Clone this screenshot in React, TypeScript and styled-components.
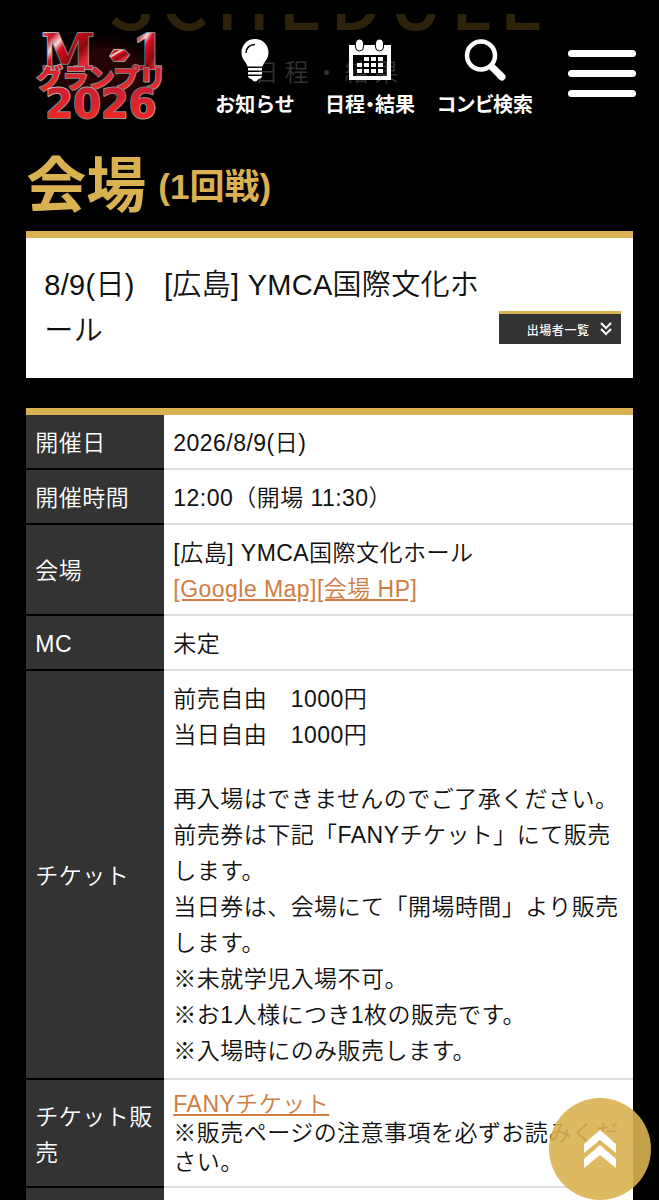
import type { ReactNode } from 'react';
import styled, { createGlobalStyle } from 'styled-components';

const GOLD = '#d9b151';
const DARK = '#333';

const GlobalStyle = createGlobalStyle`
  * {
    box-sizing: border-box;
  }
  body {
    margin: 0;
    background: #000;
    color: #111;
    font-family: 'Liberation Sans', 'Noto Sans CJK JP', sans-serif;
    font-size: 23px;
    font-weight: 350;
    line-height: 36px;
    letter-spacing: 0.02em;
  }
  h1, h2, p {
    margin: 0;
  }
`;

const Page = styled.div`
  height: 100vh;
  overflow: hidden;
  padding-top: 14px;
`;

const Hero = styled.section`
  height: 141px;
  text-align: center;
`;

const HeroTitle = styled.h1`
  display: flex;
  align-items: flex-end;
  justify-content: center;
  height: 21px;
  overflow: hidden;
  color: #2f220a;
  font-family: 'Noto Sans CJK JP', sans-serif;
  font-size: 74px;
  font-weight: 500;
  line-height: 74px;
  letter-spacing: 0.1em;
`;

const HeroSub = styled.p`
  padding-top: 20px;
  color: #333;
  font-size: 24px;
  letter-spacing: 0.25em;
`;

const Header = styled.header`
  position: absolute;
  top: 14px;
  left: 0;
  right: 0;
  display: flex;
  align-items: flex-start;
  padding: 12px 23px 0 20px;
`;

const LogoLink = styled.a`
  flex: none;
  line-height: 0;
`;

const Nav = styled.nav`
  display: flex;
  flex: 1;
  justify-content: center;
  padding: 12px 8px 0 0;
`;

const NavItem = styled.a<{ $tight?: boolean }>`
  display: flex;
  flex-direction: column;
  align-items: center;
  gap: 10px;
  width: 115px;
  color: #fff;
  font-family: 'Noto Sans CJK JP', sans-serif;
  font-size: 20px;
  font-weight: 700;
  line-height: 24px;
  letter-spacing: 0;
  font-feature-settings: ${(p) => (p.$tight ? "'palt'" : 'normal')};
  text-decoration: none;
  white-space: nowrap;
`;

const MenuButton = styled.button`
  display: flex;
  flex: none;
  flex-direction: column;
  gap: 13px;
  width: 68px;
  margin-top: 24px;
  padding: 0;
  border: 0;
  background: none;
  cursor: pointer;
`;

const MenuBar = styled.span`
  width: 100%;
  height: 7px;
  border-radius: 4px;
  background: #fff;
`;

const Main = styled.main`
  padding: 0 4%;
`;

const Heading = styled.h2`
  display: flex;
  align-items: center;
  gap: 12px;
  padding-bottom: 12px;
  color: ${GOLD};
  font-size: 60px;
  font-weight: 700;
  line-height: 64px;
  letter-spacing: 0;
`;

const Round = styled.span`
  font-size: 35px;
`;

const VenueCard = styled.section`
  display: flex;
  align-items: flex-end;
  gap: 12px;
  margin-bottom: 30px;
  padding: 24px 12px 24px 18px;
  border-top: 7px solid ${GOLD};
  background: #fff;
`;

const VenueName = styled.p`
  flex: 1;
  font-size: 29px;
  line-height: 46px;
  letter-spacing: 0.01em;
  line-break: loose;
`;

const ListButton = styled.button`
  display: flex;
  flex: none;
  align-items: center;
  justify-content: flex-end;
  gap: 10px;
  width: 122px;
  height: 33px;
  margin-bottom: 10px;
  padding: 0 9px;
  border: 0;
  border-top: 3px solid ${GOLD};
  background: ${DARK};
  color: #fff;
  font-family: 'Noto Sans CJK JP', sans-serif;
  font-size: 12px;
  font-weight: 500;
  letter-spacing: 0.05em;
  cursor: pointer;
`;

const InfoTable = styled.table`
  width: 100%;
  border-top: 7px solid ${GOLD};
  border-spacing: 0;
  background: #fff;
  table-layout: fixed;
`;

const Label = styled.th`
  width: 138px;
  height: 55px;
  padding: 10px 8px 7px 9px;
  border-bottom: 2px solid #000;
  background: ${DARK};
  color: #fff;
  font-weight: 350;
  text-align: left;
`;

const Value = styled.td<{ $roomy?: boolean }>`
  padding: ${(p) => (p.$roomy ? '10px 8px 9px 9px' : '10px 8px 7px 9px')};
  border-bottom: 2px solid #ddd;
`;

const Paragraph = styled.p`
  & + & {
    margin-top: 28px;
  }
`;

const Note = styled.p`
  line-height: 29px;
`;

const TextLink = styled.a`
  color: #d07c42;
  text-decoration: underline;
`;

const PageTop = styled.button`
  position: fixed;
  right: 8px;
  bottom: 0;
  display: flex;
  align-items: center;
  justify-content: center;
  width: 102px;
  height: 102px;
  padding: 0;
  border: 0;
  border-radius: 50%;
  background: rgba(217, 177, 81, 0.9);
  cursor: pointer;
`;

const Logo = () => (
  <svg width="160" height="104" viewBox="0 0 160 104" role="img" aria-label="M-1グランプリ2026">
    <defs>
      <linearGradient id="gem" x1="0" y1="0" x2="1" y2="1">
        <stop offset="0" stopColor="#ff8f8f" />
        <stop offset="0.2" stopColor="#c30f1c" />
        <stop offset="0.32" stopColor="#f6dcdc" />
        <stop offset="0.4" stopColor="#d8101f" />
        <stop offset="0.6" stopColor="#8d0710" />
        <stop offset="0.75" stopColor="#e8273a" />
        <stop offset="1" stopColor="#c01545" />
      </linearGradient>
      <linearGradient id="red" x1="0" y1="0" x2="0" y2="1">
        <stop offset="0" stopColor="#c81a35" />
        <stop offset="1" stopColor="#f52c22" />
      </linearGradient>
      <linearGradient id="chrome" x1="0" y1="0" x2="1" y2="1">
        <stop offset="0" stopColor="#d5d5d5" />
        <stop offset="0.5" stopColor="#777" />
        <stop offset="1" stopColor="#b8b0b0" />
      </linearGradient>
      <radialGradient id="glow">
        <stop offset="0.5" stopColor="#4a080c" stopOpacity="0.5" />
        <stop offset="1" stopColor="#000" stopOpacity="0" />
      </radialGradient>
    </defs>
    <ellipse cx="80" cy="48" rx="80" ry="48" fill="url(#glow)" />
    <g
      fill="url(#gem)"
      stroke="url(#chrome)"
      strokeWidth="2"
      paintOrder="stroke"
      strokeLinejoin="round"
      letterSpacing="0"
      fontFamily="'DejaVu Serif', serif"
      fontWeight="700"
      fontSize="48"
    >
      <text x="48" y="43" textAnchor="middle">M</text>
      <path d="M90 30l4-6h10l5 5-5 6H94z" />
      <text x="129" y="43" textAnchor="middle">1</text>
    </g>
    <g
      fill="url(#red)"
      stroke="url(#chrome)"
      strokeWidth="2"
      paintOrder="stroke"
      strokeLinejoin="round"
      letterSpacing="0"
      textAnchor="middle"
      fontWeight="700"
    >
      <text x="81" y="62" fontSize="26" fontFamily="'Noto Sans CJK JP', sans-serif" fontWeight="900">
        グランプリ
      </text>
      <text x="81" y="92" fontSize="40" fontFamily="'DejaVu Sans', sans-serif">2026</text>
    </g>
  </svg>
);

const BulbIcon = () => (
  <svg width="42" height="44" viewBox="0 0 42 44" aria-hidden="true">
    <path
      fill="#fff"
      d="M21 1C13 1 7.500 7 7.500 14.500c0 6 3.500 8.500 5 11.500.8 1.500.5 2.500 1.500 2.500h14c1 0 .7-1 1.500-2.500 1.500-3 5-5.500 5-11.500C34.500 7 29 1 21 1zM14 30h14v2.500H14zM14 34h14v2.500H14zM14 38h14c0 2-2 2.600-4 3.500-.8 1.300-1.500 2-3 2s-2.200-.7-3-2c-2-.9-4-1.500-4-3.500z"
    />
    <path d="M12 15c0-5 3.500-8.500 9-8.500" fill="none" stroke="#000" strokeWidth="1.500" />
  </svg>
);

const CALENDAR_DOTS = [
  [1, 0], [2, 0], [3, 0],
  [0, 1], [1, 1], [2, 1], [3, 1],
  [0, 2], [1, 2], [2, 2], [3, 2],
];

const CalendarIcon = () => (
  <svg width="42" height="44" viewBox="0 0 42 44" aria-hidden="true">
    <path fill="#fff" fillRule="evenodd" d="M0 7h42v35H0zM4 17v21h34V17z" />
    <rect x="6.500" y="1" width="8" height="12" rx="4" fill="#fff" stroke="#000" />
    <rect x="26.500" y="1" width="8" height="12" rx="4" fill="#fff" stroke="#000" />
    {CALENDAR_DOTS.map(([col, row]) => (
      <rect key={`${col}-${row}`} x={8 + col * 7} y={19 + row * 6} width="5" height="4" fill="#fff" />
    ))}
  </svg>
);

const SearchIcon = () => (
  <svg width="42" height="44" viewBox="0 0 42 44" aria-hidden="true">
    <circle cx="17" cy="17.500" r="14" fill="none" stroke="#fff" strokeWidth="4.500" />
    <path d="M26.500 27.500l11.500 11.500" stroke="#fff" strokeWidth="7" />
    <path d="M36 37l2 2" stroke="#fff" strokeWidth="7" strokeLinecap="round" />
  </svg>
);

const ROWS: { label: string; value: ReactNode; roomy?: boolean }[] = [
  { label: '開催日', value: '2026/8/9(日)' },
  { label: '開催時間', value: '12:00（開場 11:30）' },
  {
    label: '会場',
    value: (
      <>
        [広島] YMCA国際文化ホール
        <br />
        <TextLink href="#map">[Google Map]</TextLink>
        <TextLink href="#hp">[会場 HP]</TextLink>
      </>
    ),
  },
  { label: 'MC', value: '未定' },
  {
    label: 'チケット',
    roomy: true,
    value: (
      <>
        <Paragraph>
          前売自由　1000円
          <br />
          当日自由　1000円
        </Paragraph>
        <Paragraph>
          再入場はできませんのでご了承ください。
          <br />
          前売券は下記「FANYチケット」にて販売します。
          <br />
          当日券は、会場にて「開場時間」より販売します。
          <br />
          ※未就学児入場不可。
          <br />
          ※お1人様につき1枚の販売です。
          <br />
          ※入場時にのみ販売します。
        </Paragraph>
      </>
    ),
  },
  {
    label: 'チケット販売',
    roomy: true,
    value: (
      <Note>
        <TextLink href="#ticket">FANYチケット</TextLink>
        <br />
        ※販売ページの注意事項を必ずお読みください。
      </Note>
    ),
  },
  { label: '', value: '' },
];

export default function App() {
  return (
    <Page lang="ja">
      <GlobalStyle />
      <Hero>
        <HeroTitle>SCHEDULE</HeroTitle>
        <HeroSub>日程・結果</HeroSub>
      </Hero>
      <Header>
        <LogoLink href="#top">
          <Logo />
        </LogoLink>
        <Nav>
          <NavItem href="#news">
            <BulbIcon />
            お知らせ
          </NavItem>
          <NavItem href="#schedule" $tight>
            <CalendarIcon />
            日程・結果
          </NavItem>
          <NavItem href="#search" $tight>
            <SearchIcon />
            コンビ検索
          </NavItem>
        </Nav>
        <MenuButton aria-label="メニュー">
          <MenuBar />
          <MenuBar />
          <MenuBar />
        </MenuButton>
      </Header>
      <Main>
        <Heading>
          会場
          <Round>(1回戦)</Round>
        </Heading>
        <VenueCard>
          <VenueName>8/9(日)　[広島] YMCA国際文化ホール</VenueName>
          <ListButton>
            出場者一覧
            <svg width="12" height="14" viewBox="0 0 12 14" aria-hidden="true">
              <path d="M1 1l5 5 5-5M1 7l5 5 5-5" fill="none" stroke="#fff" strokeWidth="2" />
            </svg>
          </ListButton>
        </VenueCard>
        <InfoTable>
          <tbody>
            {ROWS.map((row) => (
              <tr key={row.label}>
                <Label scope="row">{row.label}</Label>
                <Value $roomy={row.roomy}>{row.value}</Value>
              </tr>
            ))}
          </tbody>
        </InfoTable>
      </Main>
      <PageTop aria-label="ページの先頭へ">
        <svg width="32" height="38" viewBox="0 0 32 38" aria-hidden="true">
          <path d="M16 0l16 14v9L16 10 0 23v-9zM16 15l16 14v9L16 25 0 38v-9z" fill="#fff" />
        </svg>
      </PageTop>
    </Page>
  );
}
